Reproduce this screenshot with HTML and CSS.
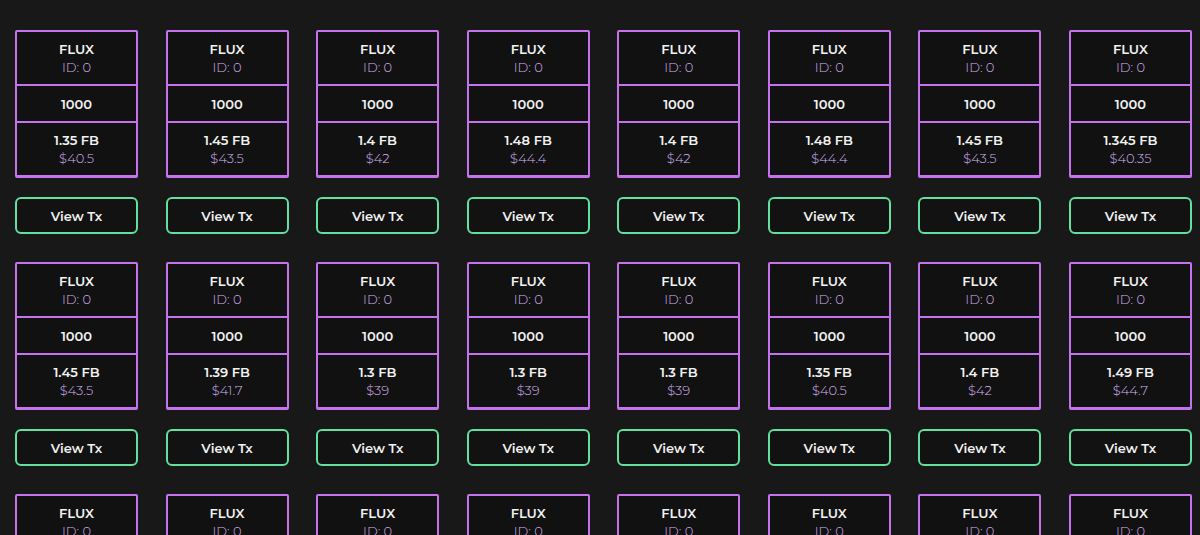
FILE: index.html
```html
<!DOCTYPE html>
<html lang="en">
  <head>
    <meta charset="UTF-8" />
    <meta name="viewport" content="width=device-width, initial-scale=1.0" />
    <title>Listings</title>
    <link rel="stylesheet" href="styles.css">
  </head>
  <body>
    <div class="grid" id="grid"></div>
    <script>
      const prices = [
        [1.35, 40.5], [1.45, 43.5], [1.4, 42], [1.48, 44.4],
        [1.4, 42], [1.48, 44.4], [1.45, 43.5], [1.345, 40.35],
        [1.45, 43.5], [1.39, 41.7], [1.3, 39], [1.3, 39],
        [1.3, 39], [1.35, 40.5], [1.4, 42], [1.49, 44.7],
        [1.4, 42], [1.4, 42], [1.4, 42], [1.4, 42],
        [1.4, 42], [1.4, 42], [1.4, 42], [1.4, 42]
      ];
      const grid = document.getElementById("grid");
      prices.forEach(([fb, usd]) => {
        const item = document.createElement("div");
        item.className = "item";
        item.innerHTML = `
          <div class="card">
            <div class="cell top">
              <span class="name">FLUX</span>
              <span class="sub">ID: 0</span>
            </div>
            <div class="cell mid">
              <span class="name">1000</span>
            </div>
            <div class="cell bottom">
              <span class="name">${fb} FB</span>
              <span class="sub">$${usd}</span>
            </div>
          </div>
          <button class="view-btn">View Tx</button>
        `;
        grid.appendChild(item);
      });
    </script>
  </body>
</html>
```

FILE: styles.css
```css
* {
  margin: 0;
  padding: 0;
  box-sizing: border-box;
}

body {
  background-color: #181818;
  color: #f2f2f2;
  font-family: Montserrat, "Open Sans", "Liberation Sans", sans-serif;
}

.grid {
  display: grid;
  grid-template-columns: repeat(8, 123px);
  justify-content: space-between;
  row-gap: 28px;
  padding: 30px 8px 0 15px;
}

.item {
  display: flex;
  flex-direction: column;
  gap: 19px;
}

.card {
  background-color: #111;
  border: 2px solid #c473ec;
  border-bottom-width: 3px;
  border-radius: 2px;
  display: flex;
  flex-direction: column;
}

.cell {
  display: flex;
  flex-direction: column;
  align-items: center;
  justify-content: center;
  line-height: 18px;
}

.top {
  height: 54px;
  border-bottom: 2px solid #c473ec;
}

.mid {
  height: 37px;
  border-bottom: 2px solid #c473ec;
}

.bottom {
  height: 52px;
}

.name {
  font-size: 13px;
  font-weight: 600;
}

.sub {
  font-size: 13px;
  font-weight: 300;
  color: #d4b2f2;
}

.view-btn {
  height: 37px;
  background-color: #121212;
  color: #f2f2f2;
  border: 2px solid #62e0a0;
  border-radius: 6px;
  font-family: inherit;
  font-size: 13px;
  font-weight: 600;
  cursor: pointer;
}
```
